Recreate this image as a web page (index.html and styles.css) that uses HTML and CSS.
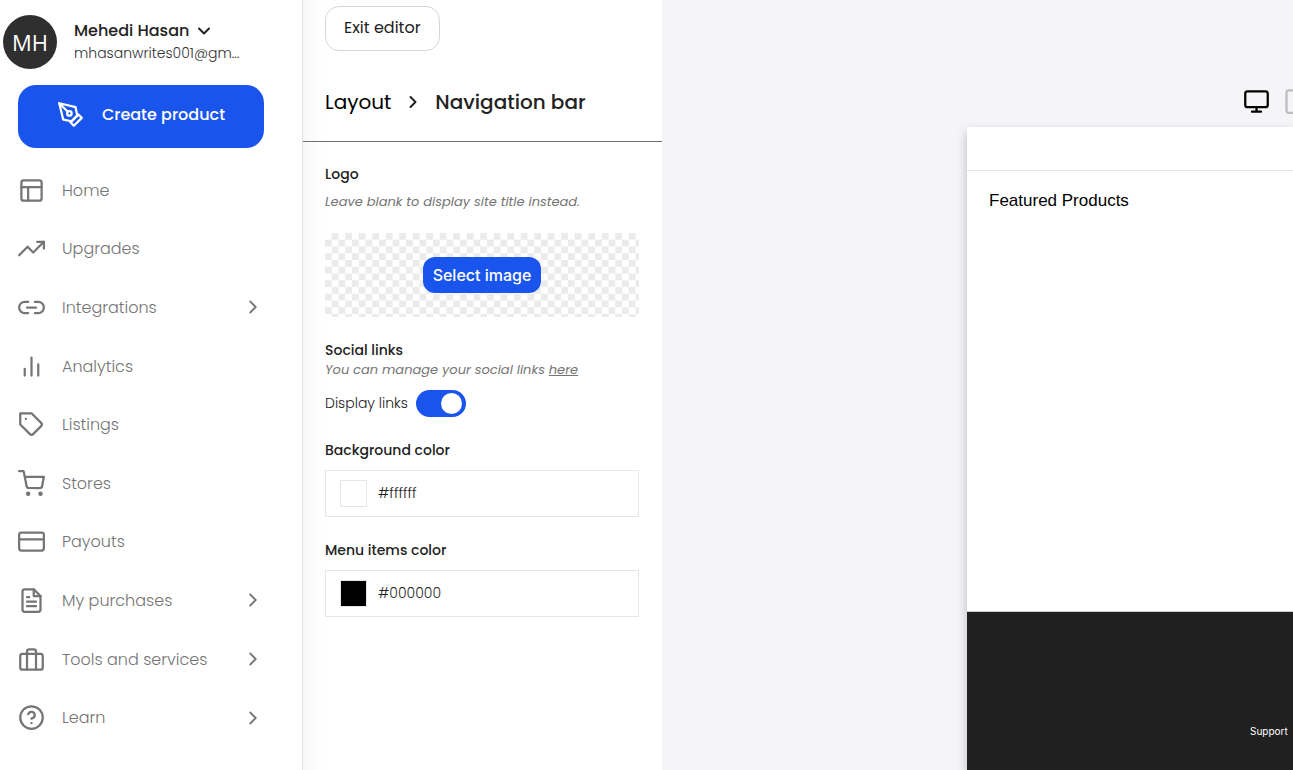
FILE: index.html
```html
<!DOCTYPE html>
<html lang="en">
<head>
  <meta charset="UTF-8" />
  <meta name="viewport" content="width=device-width, initial-scale=1.0"/>
  <title>Store editor - Navigation bar</title>
  <link rel="stylesheet" href="styles.css">
</head>
<body>
  <div class="app">
    <!-- Sidebar -->
    <aside class="sidebar">
      <button class="account" type="button">
        <span class="avatar">MH</span>
        <span class="account-text">
          <span class="account-name">Mehedi Hasan
            <svg class="icon icon-tiny" viewBox="0 0 24 24"><path d="M6 9l6 6 6-6"/></svg>
          </span>
          <span class="account-email">mhasanwrites001@gm...</span>
        </span>
      </button>

      <button class="create-btn" type="button">
        <svg class="icon" viewBox="0 0 24 24"><path d="M12 19l7-7 3 3-7 7-3-3z"/><path d="M18 13l-1.5-7.5L2 2l3.5 14.5L13 18l5-5z"/><path d="M2 2l7.586 7.586"/><circle cx="11" cy="11" r="2"/></svg>
        Create product
      </button>

      <nav class="menu">
        <a href="#home">
          <svg class="icon" viewBox="0 0 24 24"><rect x="3" y="3" width="18" height="18" rx="2"/><path d="M3 9h18M9 21V9"/></svg>
          <span>Home</span>
        </a>
        <a href="#upgrades">
          <svg class="icon" viewBox="0 0 24 24"><path d="M23 6l-9.5 9.5-5-5L1 18"/><path d="M17 6h6v6"/></svg>
          <span>Upgrades</span>
        </a>
        <a href="#integrations">
          <svg class="icon" viewBox="0 0 24 24"><path d="M15 7h3a5 5 0 0 1 5 5 5 5 0 0 1-5 5h-3m-6 0H6a5 5 0 0 1-5-5 5 5 0 0 1 5-5h3"/><path d="M8 12h8"/></svg>
          <span>Integrations</span>
          <svg class="icon icon-small" viewBox="0 0 24 24"><path d="M9 18l6-6-6-6"/></svg>
        </a>
        <a href="#analytics">
          <svg class="icon" viewBox="0 0 24 24"><path d="M18 20V10M12 20V4M6 20v-6"/></svg>
          <span>Analytics</span>
        </a>
        <a href="#listings">
          <svg class="icon" viewBox="0 0 24 24"><path d="M20.59 13.41l-7.17 7.17a2 2 0 0 1-2.83 0L2 12V2h10l8.59 8.59a2 2 0 0 1 0 2.82z"/><path d="M7 7h.01"/></svg>
          <span>Listings</span>
        </a>
        <a href="#stores">
          <svg class="icon" viewBox="0 0 24 24"><circle cx="9" cy="21" r="1"/><circle cx="20" cy="21" r="1"/><path d="M1 1h4l2.68 13.39a2 2 0 0 0 2 1.61h9.72a2 2 0 0 0 2-1.61L23 6H6"/></svg>
          <span>Stores</span>
        </a>
        <a href="#payouts">
          <svg class="icon" viewBox="0 0 24 24"><rect x="1" y="4" width="22" height="16" rx="2"/><path d="M1 10h22"/></svg>
          <span>Payouts</span>
        </a>
        <a href="#purchases">
          <svg class="icon" viewBox="0 0 24 24"><path d="M14 2H6a2 2 0 0 0-2 2v16a2 2 0 0 0 2 2h12a2 2 0 0 0 2-2V8z"/><path d="M14 2v6h6M16 13H8M16 17H8M10 9H8"/></svg>
          <span>My purchases</span>
          <svg class="icon icon-small" viewBox="0 0 24 24"><path d="M9 18l6-6-6-6"/></svg>
        </a>
        <a href="#tools">
          <svg class="icon" viewBox="0 0 24 24"><rect x="2" y="7" width="20" height="14" rx="2"/><path d="M16 21V5a2 2 0 0 0-2-2h-4a2 2 0 0 0-2 2v16"/></svg>
          <span>Tools and services</span>
          <svg class="icon icon-small" viewBox="0 0 24 24"><path d="M9 18l6-6-6-6"/></svg>
        </a>
        <a href="#learn">
          <svg class="icon" viewBox="0 0 24 24"><circle cx="12" cy="12" r="10"/><path d="M9.09 9a3 3 0 0 1 5.83 1c0 2-3 3-3 3M12 17h.01"/></svg>
          <span>Learn</span>
          <svg class="icon icon-small" viewBox="0 0 24 24"><path d="M9 18l6-6-6-6"/></svg>
        </a>
      </nav>
    </aside>

    <!-- Settings panel -->
    <section class="panel">
      <header class="panel-header">
        <button class="exit-btn" type="button">Exit editor</button>
        <div class="breadcrumb">
          <a href="#layout">Layout</a>
          <svg class="icon icon-tiny" viewBox="0 0 24 24"><path d="M9 18l6-6-6-6"/></svg>
          <h1>Navigation bar</h1>
        </div>
      </header>

      <form class="settings">
        <div class="group">
          <h2>Logo</h2>
          <p class="hint hint-logo">Leave blank to display site title instead.</p>
          <div class="drop-area">
            <button class="select-btn" type="button">Select image</button>
          </div>
        </div>

        <div class="group">
          <h2>Social links</h2>
          <p class="hint">You can manage your social links <a href="#social">here</a></p>
          <div class="toggle-row">
            <label for="displayLinks">Display links</label>
            <input class="toggle" type="checkbox" id="displayLinks" checked>
          </div>
        </div>

        <div class="group">
          <h2><label for="bgColor">Background color</label></h2>
          <div class="color-field">
            <input class="swatch" type="color" value="#ffffff" aria-label="Pick background color">
            <input class="hex" type="text" id="bgColor" value="#ffffff">
          </div>
        </div>

        <div class="group">
          <h2><label for="menuColor">Menu items color</label></h2>
          <div class="color-field">
            <input class="swatch" type="color" value="#000000" aria-label="Pick menu items color">
            <input class="hex" type="text" id="menuColor" value="#000000">
          </div>
        </div>
      </form>
    </section>

    <!-- Store preview -->
    <main class="preview">
      <div class="devices">
        <button class="device active" type="button" aria-label="Desktop">
          <svg class="icon" viewBox="0 0 24 24"><rect x="2" y="3" width="20" height="14" rx="2"/><path d="M8 21h8M12 17v4"/></svg>
        </button>
        <button class="device" type="button" aria-label="Tablet">
          <svg class="icon" viewBox="0 0 24 24"><rect x="4" y="2" width="16" height="20" rx="2"/><path d="M12 18h.01"/></svg>
        </button>
      </div>
      <div class="site">
        <div class="site-nav"></div>
        <div class="site-body">
          <p>Featured Products</p>
        </div>
        <footer class="site-footer">
          <a href="#support">Support</a>
        </footer>
      </div>
    </main>
  </div>
</body>
</html>
```

FILE: styles.css
```css
* {
  box-sizing: border-box;
}

body {
  margin: 0;
  font-family: Poppins, Inter, sans-serif;
  font-size: 16px;
  color: #222;
  background: #f5f5f8;
}

h1, h2, p {
  margin: 0;
}

a {
  color: inherit;
}

button {
  font: inherit;
  color: inherit;
  border: none;
  background: none;
  padding: 0;
  cursor: pointer;
}

.app {
  display: flex;
  min-height: 100vh;
}

.icon {
  width: 27px;
  height: 27px;
  flex: none;
  display: block;
  fill: none;
  stroke: currentColor;
  stroke-width: 2;
  stroke-linecap: round;
  stroke-linejoin: round;
}

.icon-small {
  width: 22px;
  height: 22px;
}

.icon-tiny {
  width: 20px;
  height: 20px;
  stroke-width: 2.4;
}

/* Sidebar */
.sidebar {
  flex: none;
  width: 303px;
  display: flex;
  flex-direction: column;
  background: #fff;
  border-right: 1px solid #e4e4e4;
  padding-bottom: 23px;
}

.account {
  display: flex;
  align-items: center;
  gap: 17px;
  margin: 15px 0 16px 3px;
  text-align: left;
}

.avatar {
  width: 54px;
  height: 54px;
  border-radius: 50%;
  background: #2f2f2f;
  color: #fff;
  font-family: "Open Sans", sans-serif;
  font-size: 22px;
  display: flex;
  align-items: center;
  justify-content: center;
}

.account-text {
  display: flex;
  flex-direction: column;
}

.account-name {
  display: flex;
  align-items: center;
  gap: 5px;
  font-weight: 500;
  line-height: 22px;
}

.account-email {
  font-size: 14px;
  font-weight: 300;
  line-height: 22px;
  color: #333;
}

.create-btn {
  display: flex;
  align-items: center;
  justify-content: center;
  gap: 18px;
  height: 63px;
  margin: 0 38px 0 18px;
  padding-bottom: 4px;
  border-radius: 18px;
  background: #1954ec;
  color: #fff;
  font-weight: 500;
}

.menu {
  flex: 1;
  display: flex;
  flex-direction: column;
  margin: 13px 38px 0 18px;
}

.menu a {
  flex: 1;
  min-height: 44px;
  display: flex;
  align-items: center;
  gap: 17px;
  color: #757575;
  font-weight: 300;
  text-decoration: none;
}

.menu span {
  flex: 1;
}

/* Settings panel */
.panel {
  flex: none;
  width: 359px;
  background: linear-gradient(to right, #f8f8f8, #fff 20px);
}

.panel-header {
  padding: 6px 22px 27px;
  border-bottom: 1px solid #6f6f6f;
}

.exit-btn {
  height: 45px;
  padding: 0 18px 3px;
  border: 1px solid #d6d6d6;
  border-radius: 14px;
  background: #fff;
}

.breadcrumb {
  display: flex;
  align-items: center;
  gap: 12px;
  margin-top: 39px;
  font-size: 20px;
  line-height: 24px;
}

.breadcrumb a {
  color: #000;
  text-decoration: none;
}

.breadcrumb h1 {
  font-size: 20px;
  font-weight: 500;
}

.settings {
  display: flex;
  flex-direction: column;
  gap: 23px;
  padding: 22px 23px 22px 22px;
}

.group h2 {
  font-size: 14px;
  line-height: 20px;
  font-weight: 500;
}

.hint {
  font-size: 13px;
  line-height: 20px;
  font-style: italic;
  color: #757575;
}

.hint-logo {
  margin-top: 8px;
}

.drop-area {
  display: flex;
  align-items: center;
  justify-content: center;
  height: 84px;
  margin-top: 21px;
  background: #fff url("data:image/svg+xml,%3Csvg xmlns='http://www.w3.org/2000/svg' viewBox='0 0 4 4' width='27' height='27'%3E%3Cpath fill='%23ebebeb' d='M1 0h1v1H1zM3 0h1v1H3zM0 1h1v1H0zM2 1h1v1H2zM1 2h1v1H1zM3 2h1v1H3zM0 3h1v1H0zM2 3h1v1H2z'/%3E%3C/svg%3E") 0 0 / 27px 27px;
}

.select-btn {
  height: 36px;
  padding: 0 10px 1px;
  border-radius: 12px;
  background: #1954ec;
  color: #fff;
  font-family: Inter, sans-serif;
  font-weight: 500;
}

.toggle-row {
  display: flex;
  align-items: center;
  gap: 8px;
  margin-top: 10px;
  font-size: 14px;
  font-weight: 300;
}

.toggle {
  appearance: none;
  display: flex;
  align-items: center;
  width: 50px;
  height: 27px;
  margin: 0;
  padding: 0 4px;
  border-radius: 14px;
  background: #bbb;
  cursor: pointer;
}

.toggle::before {
  content: "";
  width: 21px;
  height: 21px;
  border-radius: 50%;
  background: #fff;
}

.toggle:checked {
  background: #1954ec;
  justify-content: flex-end;
}

.color-field {
  display: flex;
  align-items: center;
  gap: 11px;
  height: 47px;
  margin-top: 10px;
  padding: 0 14px;
  border: 1px solid #e6e6e6;
  background: #fff;
}

.swatch {
  appearance: none;
  flex: none;
  width: 27px;
  height: 27px;
  padding: 0;
  border: 1px solid #e6e6e6;
  background: none;
}

.swatch::-webkit-color-swatch-wrapper {
  padding: 0;
}

.swatch::-webkit-color-swatch {
  border: none;
}

.hex {
  flex: 1;
  min-width: 0;
  padding: 0;
  border: none;
  outline: none;
  background: none;
  font: inherit;
  font-size: 14px;
  font-weight: 300;
  color: #222;
}

/* Store preview */
.preview {
  flex: 1;
  min-width: 0;
  overflow: hidden;
  display: flex;
  flex-direction: column;
  padding: 88px 0 0 305px;
}

.devices {
  display: flex;
  gap: 12px;
  padding-left: 276px;
}

.device {
  color: #bdbdbd;
}

.device.active {
  color: #000;
}

.site {
  flex: 1;
  display: flex;
  flex-direction: column;
  margin-top: 12px;
  background: #fff;
  box-shadow: 0 5px 10px rgba(0, 0, 0, 0.25);
}

.site-nav {
  height: 44px;
  border-bottom: 1px solid #e4e4e4;
}

.site-body {
  flex: 1;
  padding: 20px 22px;
  color: #000;
  font-family: "Liberation Sans", Arial, sans-serif;
  font-size: 17px;
  line-height: 20px;
}

.site-footer {
  height: 159px;
  padding: 112px 0 0 283px;
  border-top: 1px solid #ccc;
  background: #202020;
  color: #fff;
  font-family: Inter, sans-serif;
  font-size: 10px;
  line-height: 14px;
}

.site-footer a {
  text-decoration: none;
}
```
